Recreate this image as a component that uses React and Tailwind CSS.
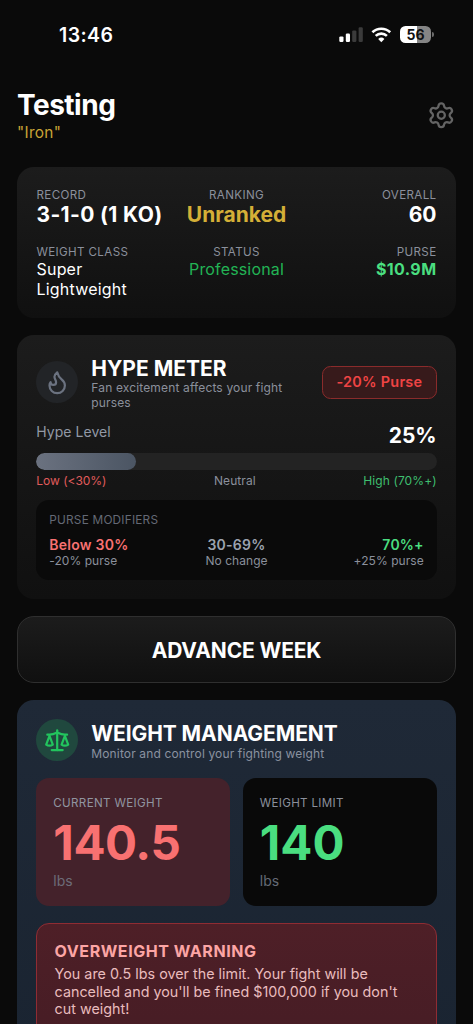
import { Settings, Flame } from "lucide-react";

function ScaleIcon() {
  return (
    <svg
      width="26.4"
      height="26.4"
      viewBox="0 0 24 24"
      fill="none"
      stroke="#22c55e"
      strokeWidth="2"
      strokeLinecap="round"
      strokeLinejoin="round"
    >
      <path d="m16 16 3-8 3 8c-.87.65-1.92 1-3 1s-2.13-.35-3-1Z" />
      <path d="m2 16 3-8 3 8c-.87.65-1.92 1-3 1s-2.13-.35-3-1Z" />
      <path d="M7 21h10" />
      <path d="M12 3v18" />
      <path d="M3 7h2c2 0 5-1 7-2 2 1 5 2 7 2h2" />
    </svg>
  );
}

function StatusBar() {
  return (
    <div className="flex h-[70px] shrink-0 items-center justify-between pr-[39px] pl-[59px]">
      <span className="text-[19.5px] leading-[24px] font-semibold tracking-[0.4px]">13:46</span>
      <div className="-mt-px flex items-center">
        <svg width="25" height="16" viewBox="0 0 25 16">
          <rect x="0.3" y="9.4" width="4.2" height="5.6" rx="1.2" fill="#fff" />
          <rect x="6.8" y="6.5" width="4.2" height="8.5" rx="1.2" fill="#fff" />
          <rect x="13.2" y="3.4" width="4.2" height="11.6" rx="1.2" fill="#3b3b3b" />
          <rect x="19.6" y="0.2" width="4.2" height="14.8" rx="1.2" fill="#3b3b3b" />
        </svg>
        <svg className="ml-[7px]" width="21" height="16" viewBox="0 0 21 16">
          <g fill="none" stroke="#fff" strokeWidth="2.6">
            <path d="M1.4 5.3A12.9 12.9 0 0 1 19.2 5.3" />
            <path d="M4.7 8.9A8.1 8.1 0 0 1 15.9 8.9" />
          </g>
          <path d="M10.3 15.2 7.2 12a4.5 4.5 0 0 1 6.2 0Z" fill="#fff" />
        </svg>
        <div className="ml-[8px] flex h-[17px] w-[31px] items-center justify-center rounded-[5.5px] bg-linear-to-r from-white from-56% to-[#858585] to-56%">
          <span className="text-[14px] leading-[17px] font-bold text-[#111]">56</span>
        </div>
        <div className="ml-[1px] h-[5px] w-[2px] rounded-r-full bg-[#6b6b6b]" />
      </div>
    </div>
  );
}

const label = "text-[11.6px] leading-[15px] tracking-[0.36px] text-[#8b909c]";

function Stats() {
  return (
    <section className="mx-[17px] h-[151px] shrink-0 rounded-[17px] bg-linear-to-b from-[#1c1c1c] to-[#101010] px-[19.5px] pt-[21px]">
      <div className="grid grid-cols-3">
        <div>
          <div className={label}>RECORD</div>
          <div className="-mt-px text-[21px] leading-[25px] font-bold tracking-[0.36px] whitespace-nowrap">3-1-0 (1 KO)</div>
        </div>
        <div className="text-center">
          <div className={label}>RANKING</div>
          <div className="-mt-px text-[21px] leading-[25px] font-bold text-[#d4af37]">Unranked</div>
        </div>
        <div className="text-right">
          <div className={label}>OVERALL</div>
          <div className="-mt-px text-[21px] leading-[25px] font-bold">60</div>
        </div>
      </div>
      <div className="mt-[18px] grid grid-cols-3">
        <div>
          <div className={label}>WEIGHT CLASS</div>
          <div className="-mt-px text-[16px] leading-[20px] tracking-[0.2px]">Super Lightweight</div>
        </div>
        <div className="text-center">
          <div className={label}>STATUS</div>
          <div className="-mt-px text-[16px] leading-[20px] tracking-[0.15px] text-[#22b455]">Professional</div>
        </div>
        <div className="text-right">
          <div className={label}>PURSE</div>
          <div className="-mt-px text-[16px] leading-[20px] font-bold tracking-[0.4px] text-[#4ade80]">$10.9M</div>
        </div>
      </div>
    </section>
  );
}

function HypeMeter() {
  return (
    <section className="mx-[17px] mt-[17px] h-[264.3px] shrink-0 rounded-[17px] bg-linear-to-b from-[#1c1c1c] to-[#101010] px-[19.3px] pt-[19px]">
      <div className="flex h-[56px] items-center">
        <div className="flex size-[42px] shrink-0 items-center justify-center rounded-full bg-[#222427]">
          <Flame size={26.4} strokeWidth={2} color="#6b7280" />
        </div>
        <div className="ml-[13px] w-[210px] shrink-0 pt-[2px]">
          <h2 className="text-[21px] leading-[25px] font-bold">HYPE METER</h2>
          <p className="-mt-px text-[12px] leading-[15px] tracking-[0.15px] text-[#8b909c]">
            Fan excitement affects your fight purses
          </p>
        </div>
        <div className="ml-auto flex h-[33px] w-[114.6px] items-center justify-center rounded-[8.5px] border border-[#8a2b2b] bg-[#371a1b] text-[14.4px] font-semibold tracking-[0.28px] text-[#ef4444]">
          -20% Purse
        </div>
      </div>
      <div className="mt-[11.5px] flex h-[27px] items-start justify-between">
        <span className="text-[14px] leading-[20px] tracking-[0.05px] text-[#9299a5]">Hype Level</span>
        <span className="mt-[1px] text-[21px] leading-[26px] font-bold">25%</span>
      </div>
      <div className="mt-[4px] h-[17px] overflow-hidden rounded-full bg-[#232323]">
        <div className="h-full w-1/4 rounded-full bg-linear-to-r from-[#6b7280] to-[#4b5563]" />
      </div>
      <div className="mt-[3.5px] flex justify-between text-[12px] leading-[16px]">
        <span className="tracking-[-0.03px] text-[#e05c5c]">Low (&lt;30%)</span>
        <span className="tracking-[0.1px] text-[#8b909c]">Neutral</span>
        <span className="tracking-[0.1px] text-[#3fbf70]">High (70%+)</span>
      </div>
      <div className="mt-[11.3px] h-[79.7px] rounded-[13px] bg-[#0a0a0a] px-[13px] pt-[12px]">
        <div className="text-[11.8px] leading-[16px] tracking-[0.22px] text-[#646975]">PURSE MODIFIERS</div>
        <div className="mt-[8px] grid grid-cols-3">
          <div>
            <div className="text-[14px] leading-[17px] font-semibold tracking-[0.25px] text-[#f87171]">Below 30%</div>
            <div className="text-[12px] leading-[15px] tracking-[0.05px] text-[#8b909c]">-20% purse</div>
          </div>
          <div className="text-center">
            <div className="text-[14px] leading-[17px] font-semibold tracking-[0.25px] text-[#9ca3af]">30-69%</div>
            <div className="text-[12px] leading-[15px] tracking-[0.05px] text-[#8b909c]">No change</div>
          </div>
          <div className="text-right">
            <div className="text-[14px] leading-[17px] font-semibold tracking-[0.2px] text-[#4ade80]">70%+</div>
            <div className="text-[12px] leading-[15px] tracking-[0.05px] text-[#8b909c]">+25% purse</div>
          </div>
        </div>
      </div>
    </section>
  );
}

function WeightManagement() {
  return (
    <section className="mx-[17px] mt-[17px] h-[420px] shrink-0 rounded-t-[17px] bg-linear-to-b from-[#1f2937] to-[#192330] px-[19.3px] pt-[19px]">
      <div className="flex h-[42px] items-start">
        <div className="flex size-[42px] shrink-0 items-center justify-center rounded-full bg-[#20483e]">
          <ScaleIcon />
        </div>
        <div className="mt-[2px] ml-[13px]">
          <h2 className="text-[21px] leading-[25px] font-bold tracking-[-0.08px]">WEIGHT MANAGEMENT</h2>
          <p className="mt-[0.5px] text-[12px] leading-[15px] tracking-[0.14px] text-[#8a92a0]">
            Monitor and control your fighting weight
          </p>
        </div>
      </div>
      <div className="mt-[17.3px] grid grid-cols-2 gap-[12.7px]">
        <div className="h-[127.5px] rounded-[13px] bg-[#44222b] px-[17px] pt-[17px]">
          <div className="text-[11.6px] leading-[16px] tracking-[0.34px] text-[#9195a0]">CURRENT WEIGHT</div>
          <div className="mt-[4px] text-[47.5px] leading-[56px] font-bold tracking-[-0.4px] text-[#f87171]">140.5</div>
          <div className="mt-[0.6px] text-[14px] leading-[18px] text-[#6d6c78]">lbs</div>
        </div>
        <div className="h-[127.5px] rounded-[13px] bg-[#090909] px-[17px] pt-[17px]">
          <div className="text-[11.6px] leading-[16px] tracking-[0.3px] text-[#8b909c]">WEIGHT LIMIT</div>
          <div className="mt-[4px] text-[47.5px] leading-[56px] font-bold text-[#4ade80]">140</div>
          <div className="mt-[0.6px] text-[14px] leading-[18px] text-[#646975]">lbs</div>
        </div>
      </div>
      <div className="mt-[16.9px] h-[140px] rounded-[13px] border border-[#8f2c33] bg-linear-to-b from-[#4e1f27] to-[#451c24] px-[17.3px] pt-[17px]">
        <h3 className="text-[16px] leading-[20px] font-bold tracking-[0.56px] text-[#fca5a5]">OVERWEIGHT WARNING</h3>
        <p className="mt-[4.8px] text-[14.3px] leading-[17.3px] tracking-[0.02px] text-[#e9bcbe]">
          You are 0.5 lbs over the limit. Your fight will be
          <br />
          cancelled and you'll be fined $100,000 if you don't
          <br />
          cut weight!
        </p>
      </div>
    </section>
  );
}

export default function App() {
  return (
    <main className="flex h-[1024px] w-[473px] flex-col overflow-hidden bg-[#0a0a0a] font-['Inter',sans-serif] text-white">
      <StatusBar />
      <header className="flex h-[97px] shrink-0 items-start justify-between pr-[17.5px] pl-[17px]">
        <div className="pt-[18px]">
          <h1 className="text-[28px] leading-[34px] font-bold tracking-[-0.5px]">Testing</h1>
          <p className="text-[15.4px] leading-[21px] tracking-[0.3px] text-[#c9a436]">"Iron"</p>
        </div>
        <Settings className="mt-[30.5px]" size={28.6} strokeWidth={1.9} color="#646464" />
      </header>
      <Stats />
      <HypeMeter />
      <button className="mx-[17px] mt-[17px] h-[66.7px] shrink-0 rounded-[17px] border border-[#2f2f2f] bg-linear-to-b from-[#1c1c1c] to-[#101010] pt-[1.5px] text-[21px] font-bold tracking-[-0.14px]">
        ADVANCE WEEK
      </button>
      <WeightManagement />
    </main>
  );
}
